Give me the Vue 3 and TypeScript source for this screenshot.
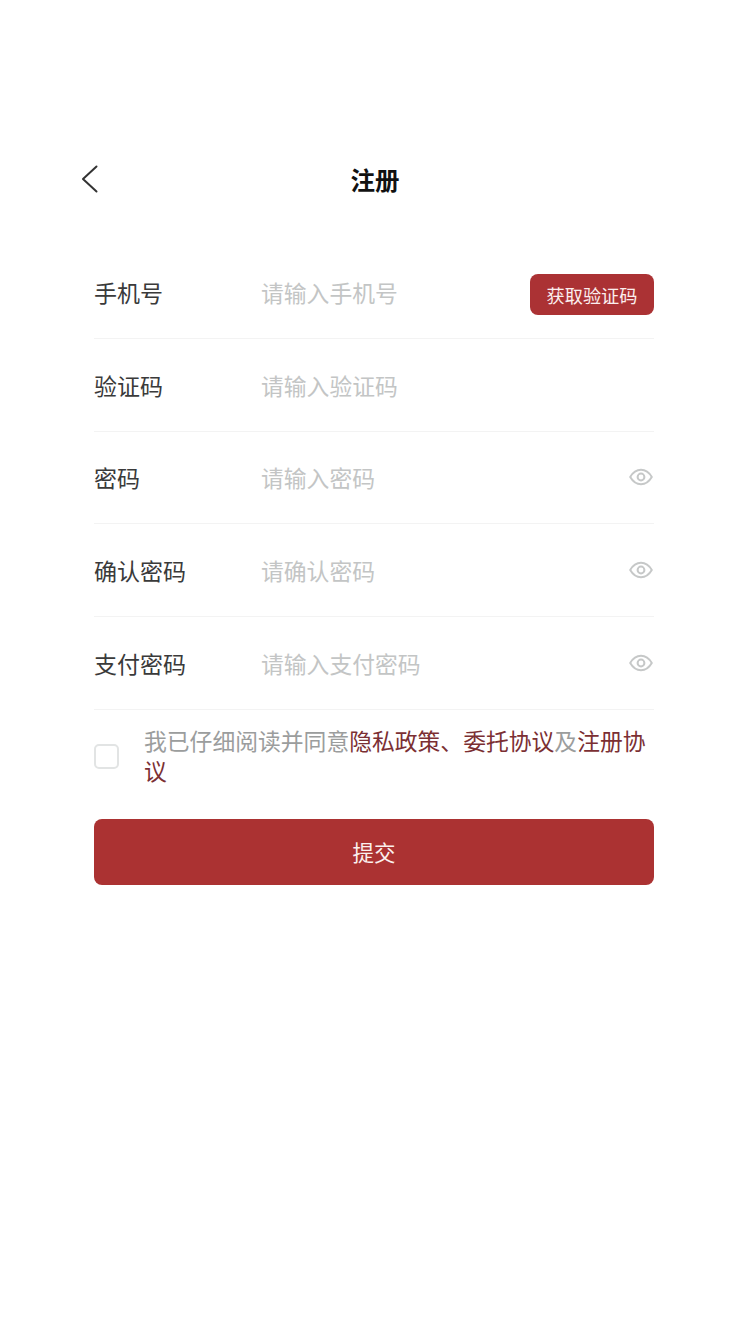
<script setup lang="ts">
interface Field {
  label: string
  placeholder: string
  type: string
  action: 'code' | 'eye' | 'none'
}

const fields: Field[] = [
  { label: '手机号', placeholder: '请输入手机号', type: 'tel', action: 'code' },
  { label: '验证码', placeholder: '请输入验证码', type: 'text', action: 'none' },
  { label: '密码', placeholder: '请输入密码', type: 'password', action: 'eye' },
  { label: '确认密码', placeholder: '请确认密码', type: 'password', action: 'eye' },
  { label: '支付密码', placeholder: '请输入支付密码', type: 'password', action: 'eye' },
]
</script>

<template>
  <main class="page">
    <header class="header">
      <button class="back" type="button" aria-label="返回">
        <svg width="20" height="28" viewBox="0 0 20 28" fill="none">
          <path d="M16.5 1.5 3 14l13.5 12.5" stroke="#333" stroke-width="2" stroke-linecap="round" stroke-linejoin="round" />
        </svg>
      </button>
      <h1 class="title">注册</h1>
    </header>

    <form class="form" @submit.prevent>
      <label v-for="field in fields" :key="field.label" class="row">
        <span class="label">{{ field.label }}</span>
        <input class="input" :type="field.type" :placeholder="field.placeholder" />
        <button v-if="field.action === 'code'" class="code" type="button">获取验证码</button>
        <svg v-else-if="field.action === 'eye'" class="eye" width="24" height="18" viewBox="0 0 24 18" fill="none">
          <path d="M1.2 9C4 4.2 7.7 1.8 12 1.8S20 4.2 22.8 9C20 13.8 16.3 16.2 12 16.2S4 13.8 1.2 9Z" stroke="#c6c8c8" stroke-width="2" stroke-linejoin="round" />
          <circle cx="12" cy="9" r="3.4" stroke="#c6c8c8" stroke-width="2" />
        </svg>
      </label>

      <div class="agreement">
        <span class="checkbox"></span>
        <p class="terms">我已仔细阅读并同意<span class="link">隐私政策、委托协议</span>及<span class="link">注册协议</span></p>
      </div>

      <button class="submit" type="submit">提交</button>
    </form>
  </main>
</template>

<style>
body {
  background: #fff;
}
</style>

<style scoped>
.page {
  box-sizing: border-box;
  width: 750px;
  min-height: 1334px;
  padding-top: 152px;
  background: #fff;
  font-family: "Liberation Sans", "Noto Sans CJK SC", sans-serif;
}

.header {
  display: grid;
  grid-template-columns: 1fr auto 1fr;
  align-items: center;
  height: 60px;
  padding-left: 80px;
  padding-right: 80px;
}

.back {
  justify-self: start;
  display: flex;
  margin: -6px 0 0;
  padding: 0;
  border: 0;
  background: none;
}

.title {
  grid-column: 2;
  margin: 0;
  color: #111;
  font-size: 24.5px;
  font-weight: 700;
  line-height: 32px;
}

.form {
  display: flex;
  flex-direction: column;
  width: 560px;
  margin: 34px 0 0 94px;
}

.row {
  box-sizing: border-box;
  display: flex;
  align-items: center;
  height: 92.75px;
  padding-top: 4px;
  border-bottom: 1.5px solid #f3f3f3;
}

.label {
  flex: none;
  width: 167px;
  color: #3a3a3a;
  font-size: 23px;
  line-height: 32px;
}

.input {
  flex: 1;
  min-width: 0;
  height: 32px;
  padding: 0;
  border: 0;
  outline: 0;
  background: none;
  color: #333;
  font: inherit;
  font-size: 22.8px;
  line-height: 32px;
}

.input::placeholder {
  color: #c3c5c5;
  opacity: 1;
}

.code {
  flex: none;
  width: 124px;
  height: 41px;
  margin-top: 2px;
  padding: 0;
  border: 0;
  border-radius: 8px;
  background: #ab3234;
  color: #fbeeee;
  font: inherit;
  font-size: 18.2px;
}

.eye {
  flex: none;
  margin-right: 1px;
  margin-bottom: 4px;
}

.agreement {
  display: flex;
  align-items: center;
  gap: 25px;
  margin-top: 17px;
}

.checkbox {
  box-sizing: border-box;
  flex: none;
  width: 25px;
  height: 25px;
  border: 2px solid #e2e4e4;
  border-radius: 5px;
  background: #fff;
}

.terms {
  margin: 0;
  color: #9b9d9d;
  font-size: 22.8px;
  line-height: 30px;
}

.link {
  color: #7b2f33;
}

.submit {
  height: 66px;
  margin-top: 32px;
  padding: 0;
  border: 0;
  border-radius: 8px;
  background: #ab3232;
  color: #fbf0ee;
  font: inherit;
  font-size: 21.5px;
}
</style>
